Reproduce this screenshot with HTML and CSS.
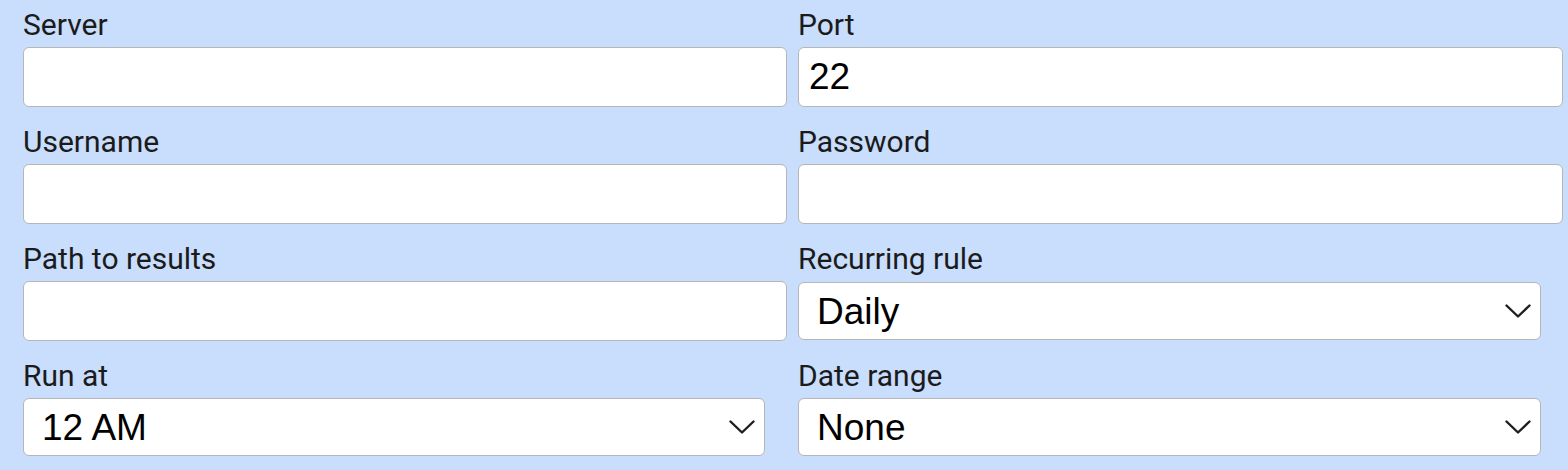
FILE: index.html
```html
<!DOCTYPE html>
<html lang="en">
<head>
<meta charset="utf-8">
<title>Export settings</title>
<link rel="stylesheet" href="styles.css">
</head>
<body>
<form class="form">
  <label class="label" for="server">Server</label>
  <label class="label" for="port">Port</label>
  <input class="input" id="server" type="text" value="">
  <input class="input" id="port" type="text" value="22">

  <label class="label" for="username">Username</label>
  <label class="label" for="password">Password</label>
  <input class="input" id="username" type="text" value="">
  <input class="input" id="password" type="password" value="">

  <label class="label" for="path">Path to results</label>
  <label class="label" for="rule">Recurring rule</label>
  <input class="input" id="path" type="text" value="">
  <div class="select-wrap">
    <select class="select" id="rule">
      <option>Daily</option>
      <option>Weekly</option>
      <option>Monthly</option>
    </select>
    <svg class="chevron" viewBox="0 0 26 14" width="26" height="14" aria-hidden="true"><path d="M1.5 1.5 L13 12.5 L24.5 1.5" fill="none" stroke="#1e1e1e" stroke-width="2.4" stroke-linecap="round" stroke-linejoin="round"/></svg>
  </div>

  <label class="label" for="runat">Run at</label>
  <label class="label" for="range">Date range</label>
  <div class="select-wrap">
    <select class="select" id="runat">
      <option>12 AM</option>
      <option>1 AM</option>
      <option>2 AM</option>
    </select>
    <svg class="chevron" viewBox="0 0 26 14" width="26" height="14" aria-hidden="true"><path d="M1.5 1.5 L13 12.5 L24.5 1.5" fill="none" stroke="#1e1e1e" stroke-width="2.4" stroke-linecap="round" stroke-linejoin="round"/></svg>
  </div>
  <div class="select-wrap">
    <select class="select" id="range">
      <option>None</option>
      <option>Last 7 days</option>
      <option>Last 30 days</option>
    </select>
    <svg class="chevron" viewBox="0 0 26 14" width="26" height="14" aria-hidden="true"><path d="M1.5 1.5 L13 12.5 L24.5 1.5" fill="none" stroke="#1e1e1e" stroke-width="2.4" stroke-linecap="round" stroke-linejoin="round"/></svg>
  </div>
</form>
</body>
</html>
```

FILE: styles.css
```css
html, body {
  margin: 0;
  padding: 0;
}

body {
  background: #c9ddfc;
  width: 1568px;
  height: 470px;
  overflow: hidden;
}

.form {
  display: grid;
  grid-template-columns: 742px 743px;
  column-gap: 33px;
  padding: 8px 0 0 23px;
  align-items: center;
}

.label {
  font-family: Roboto, "Liberation Sans", sans-serif;
  font-size: 30px;
  line-height: 34px;
  color: #1b1b1b;
  margin: 18px 0 5px;
  align-self: start;
}

.label:nth-child(1),
.label:nth-child(2) {
  margin-top: 0;
}

.input {
  box-sizing: content-box;
  width: 100%;
  height: 58px;
  padding: 0 10px;
  margin: 0;
  border: 1px solid #b6b6b6;
  border-radius: 6px;
  background: #ffffff;
  font-family: "Liberation Sans", Arial, sans-serif;
  font-size: 37px;
  color: #000000;
  outline: none;
}

.select-wrap {
  position: relative;
  width: 100%;
  height: 58px;
}

.select {
  -webkit-appearance: none;
  appearance: none;
  box-sizing: border-box;
  width: 100%;
  height: 58px;
  margin: 0;
  padding: 0 50px 0 18px;
  border: 1px solid #b6b6b6;
  border-radius: 6px;
  background: #ffffff;
  font-family: "Liberation Sans", Arial, sans-serif;
  font-size: 37px;
  color: #000000;
  outline: none;
}

.chevron {
  position: absolute;
  right: 10px;
  top: 22px;
  pointer-events: none;
}
```
